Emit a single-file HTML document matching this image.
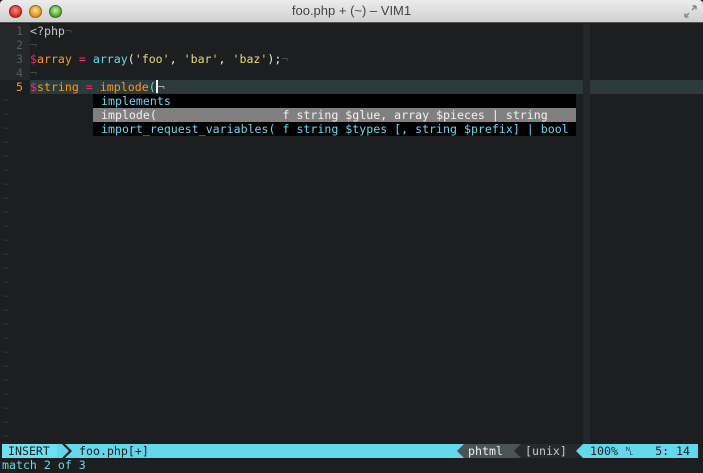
<!DOCTYPE html>
<html><head><meta charset="utf-8"><style>
*{margin:0;padding:0;box-sizing:border-box}
body{width:703px;height:473px;background:#1c1e20;overflow:hidden;position:relative;font-family:"DejaVu Sans Mono","Liberation Mono",monospace;font-size:11.6px;}
.tb{position:absolute;left:0;top:0;width:703px;height:23px;background:linear-gradient(#ececec,#d0d0d0);border-bottom:1px solid #555;border-radius:4px 4px 0 0}
.tb .t{position:absolute;left:0;right:0;top:3px;text-align:center;font-family:"Liberation Sans",sans-serif;font-size:13px;color:#444}
.dot{position:absolute;top:5px;width:13px;height:13px;border-radius:50%;border:1px solid rgba(0,0,0,.35)}
.r{position:absolute;left:0;height:14px;line-height:14px;white-space:pre;width:703px}
.g{position:absolute;left:0;top:24px;width:30px;height:56px;background:#24282b}
.ln{color:#555c60;display:inline-block;width:23px;text-align:right;margin-right:7px}
.cc{position:absolute;left:583px;top:24px;width:7px;height:420px;background:#24272a}
.cl{position:absolute;left:30px;top:80px;width:673px;height:14px;background:#2b3a3b}
.v{color:#f92672}.k{color:#fd971f}.f{color:#66d9ef}.s{color:#e6db74}.w{color:#e8e8e2}.e{color:#444a4e}
.t1{color:#3c4246;padding-left:3px;font-size:9px}
.pm{position:absolute;left:93px;width:483px;height:14px;line-height:14px;white-space:pre;padding-left:8px}
</style></head><body>
<div class="tb">
<div class="dot" style="left:9px;background:radial-gradient(circle at 50% 40%,#ff8a80,#d42a20 70%)"></div>
<div class="dot" style="left:29px;background:radial-gradient(circle at 50% 40%,#ffe08a,#e0901a 70%)"></div>
<div class="dot" style="left:49px;background:radial-gradient(circle at 50% 40%,#c8f0a0,#4aa32a 70%)"></div>
<div class="t">foo.php + (~) – VIM1</div>
<svg style="position:absolute;right:6px;top:5px" width="13" height="13" viewBox="0 0 13 13"><path d="M1 12L5 8M1 12V8.5M1 12H4.5M12 1L8 5M12 1V4.5M12 1H8.5" stroke="#888" stroke-width="1.5" fill="none"/></svg>
</div>
<div class="g"></div>
<div class="cl"></div>
<div class="cc"></div>
<div class="r" style="top:24px"><span class="ln">1</span><span style="color:#c8c8c4">&lt;?php</span><span class="e">¬</span></div>
<div class="r" style="top:38px"><span class="ln">2</span><span class="e">¬</span></div>
<div class="r" style="top:52px"><span class="ln">3</span><span class="v">$</span><span class="k">array</span><span class="w"> </span><span class="v">=</span><span class="w"> </span><span class="f">array</span><span class="w">(</span><span class="s">'foo'</span><span class="w">, </span><span class="s">'bar'</span><span class="w">, </span><span class="s">'baz'</span><span class="w">);</span><span class="e">¬</span></div>
<div class="r" style="top:66px"><span class="ln">4</span><span class="e">¬</span></div>
<div class="r" style="top:80px"><span class="ln" style="color:#fd971f">5</span><span class="v">$</span><span class="k">string</span><span class="w"> </span><span class="v">=</span><span class="w"> </span><span class="k">implode</span><span class="f">(</span><span style="display:inline-block;width:2px;height:13px;background:#fff;vertical-align:-2px"></span><span class="e" style="color:#aaa">¬</span></div>
<div id="tl"></div>
<div class="pm" style="top:94px;background:#000;color:#66d9ef">implements</div>
<div class="pm" style="top:108px;background:#808080;color:#f0f0f0">implode(                  f string $glue, array $pieces | string</div>
<div class="pm" style="top:122px;background:#000;color:#66d9ef">import_request_variables( f string $types [, string $prefix] | bool</div>
<div style="position:absolute;left:2px;top:444px;width:696px;height:14px;background:#63d8eb"></div>
<div class="r" style="top:444px;left:2px;width:auto;color:#1b1d1e;background:#6ee0f0;padding:0 7px 0 6px">INSERT</div>
<svg style="position:absolute;left:62px;top:444px" width="12" height="14"><path d="M0 0H3L10 7L3 14H0L7 7Z" fill="#1c1e20"/></svg>
<div class="r" style="top:444px;left:79px;width:auto;color:#1b1d1e">foo.php[+]</div>
<svg style="position:absolute;left:457px;top:444px" width="8" height="14"><path d="M8 0V14H7L0 7L7 0Z" fill="#4a5457"/></svg>
<div class="r" style="top:444px;left:464px;width:50px;background:#4a5457;color:#f0f0f0;padding-left:4px">phtml</div>
<svg style="position:absolute;left:514px;top:444px" width="8" height="14"><rect width="8" height="14" fill="#4a5457"/><path d="M8 0V14H7L0 7L7 0Z" fill="#272a2c"/></svg>
<div class="r" style="top:444px;left:522px;width:54px;background:#272a2c;color:#c8c8c8;padding-left:3px">[unix]</div>
<svg style="position:absolute;left:576px;top:444px" width="8" height="14"><rect width="8" height="14" fill="#272a2c"/><path d="M8 0V14H7L0 7L7 0Z" fill="#63d8eb"/></svg>
<div class="r" style="top:444px;left:590px;width:auto;color:#1b1d1e">100% ␤   5: 14</div>
<div class="r" style="top:458px;left:2px;color:#66d9ef">match 2 of 3</div>
<script>
var h='';for(var i=0;i<25;i++){h+='<div class="r t1" style="top:'+(94+i*14)+'px">~</div>';}
document.getElementById('tl').innerHTML=h;
</script>
</body></html>
